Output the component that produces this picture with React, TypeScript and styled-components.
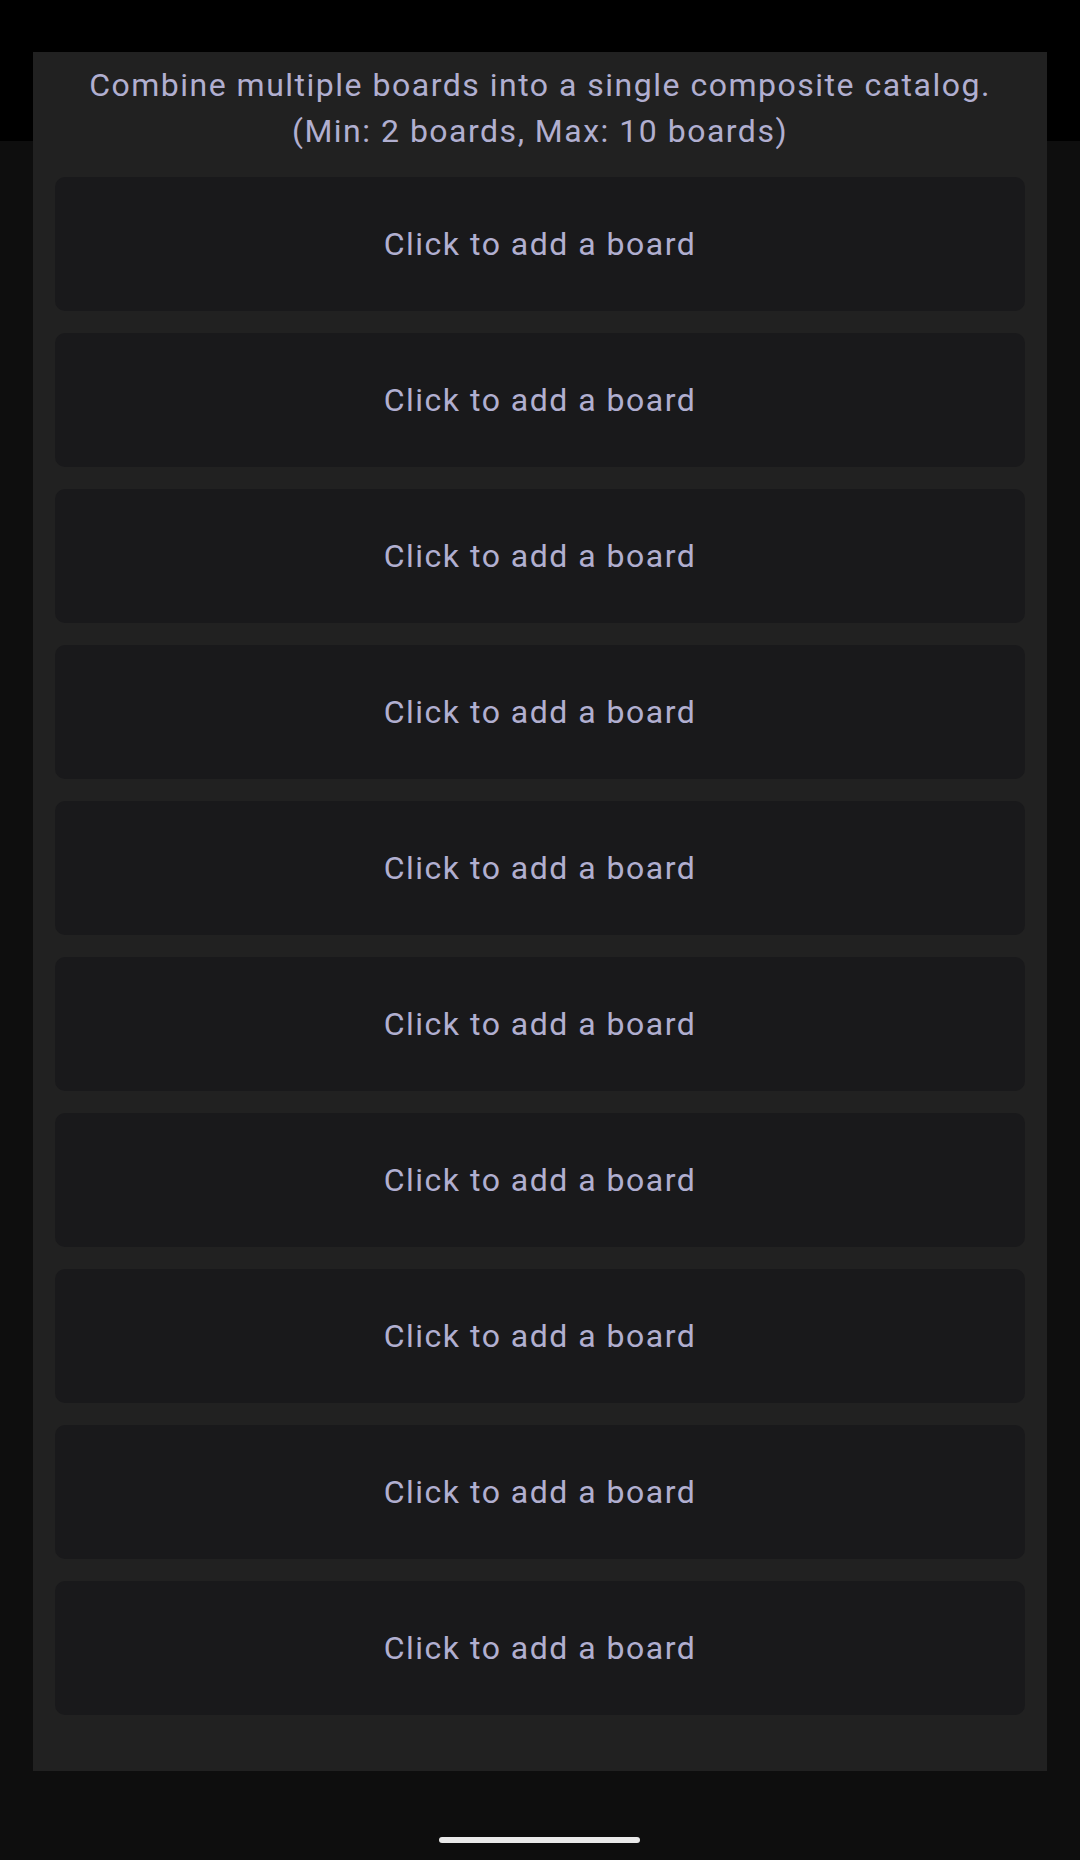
import React from "react";
import styled, { createGlobalStyle } from "styled-components";

const Global = createGlobalStyle`
  html, body { margin: 0; padding: 0; background: #0e0e0e; }
  body { font-family: Roboto, "Noto Sans", "Liberation Sans", sans-serif; }
  * { box-sizing: border-box; }
`;

const Screen = styled.div`
  position: relative;
  width: 1080px;
  height: 1860px;
  background: #0e0e0e;
  overflow: hidden;
  display: flex;
  flex-direction: column;
`;

const TopBar = styled.div`
  height: 141px;
  background: #000000;
  flex: none;
`;

const Body = styled.div`
  flex: 1;
  background: #0e0e0e;
`;

const Dialog = styled.div`
  position: absolute;
  top: 52px;
  left: 33px;
  width: 1014px;
  height: 1719px;
  background: #212121;
  padding: 10px 22px 0 22px;
  display: flex;
  flex-direction: column;
  gap: 22px;
`;

const Description = styled.p`
  margin: 0 0 1px 0;
  text-align: center;
  color: #b1afd0;
  font-size: 32px;
  line-height: 46px;
  letter-spacing: 1.5px;
`;

const SlotList = styled.div`
  display: flex;
  flex-direction: column;
  gap: 22px;
`;

const Slot = styled.button`
  height: 134px;
  width: 100%;
  border: none;
  border-radius: 10px;
  background: #19191b;
  color: #b1afd0;
  font-family: inherit;
  font-size: 32px;
  letter-spacing: 1.5px;
  display: flex;
  align-items: center;
  justify-content: center;
  cursor: pointer;
  padding: 0;
`;

const HomeIndicator = styled.div`
  position: absolute;
  left: 439px;
  top: 1837px;
  width: 201px;
  height: 6px;
  border-radius: 3px;
  background: #e9e9e9;
`;

export default function App() {
  const slots = Array.from({ length: 10 }, (_, i) => i);
  return (
    <Screen>
      <Global />
      <TopBar />
      <Body />
      <Dialog>
        <Description>
          Combine multiple boards into a single composite catalog.
          <br />
          (Min: 2 boards, Max: 10 boards)
        </Description>
        <SlotList>
          {slots.map((i) => (
            <Slot key={i}>Click to add a board</Slot>
          ))}
        </SlotList>
      </Dialog>
      <HomeIndicator />
    </Screen>
  );
}
